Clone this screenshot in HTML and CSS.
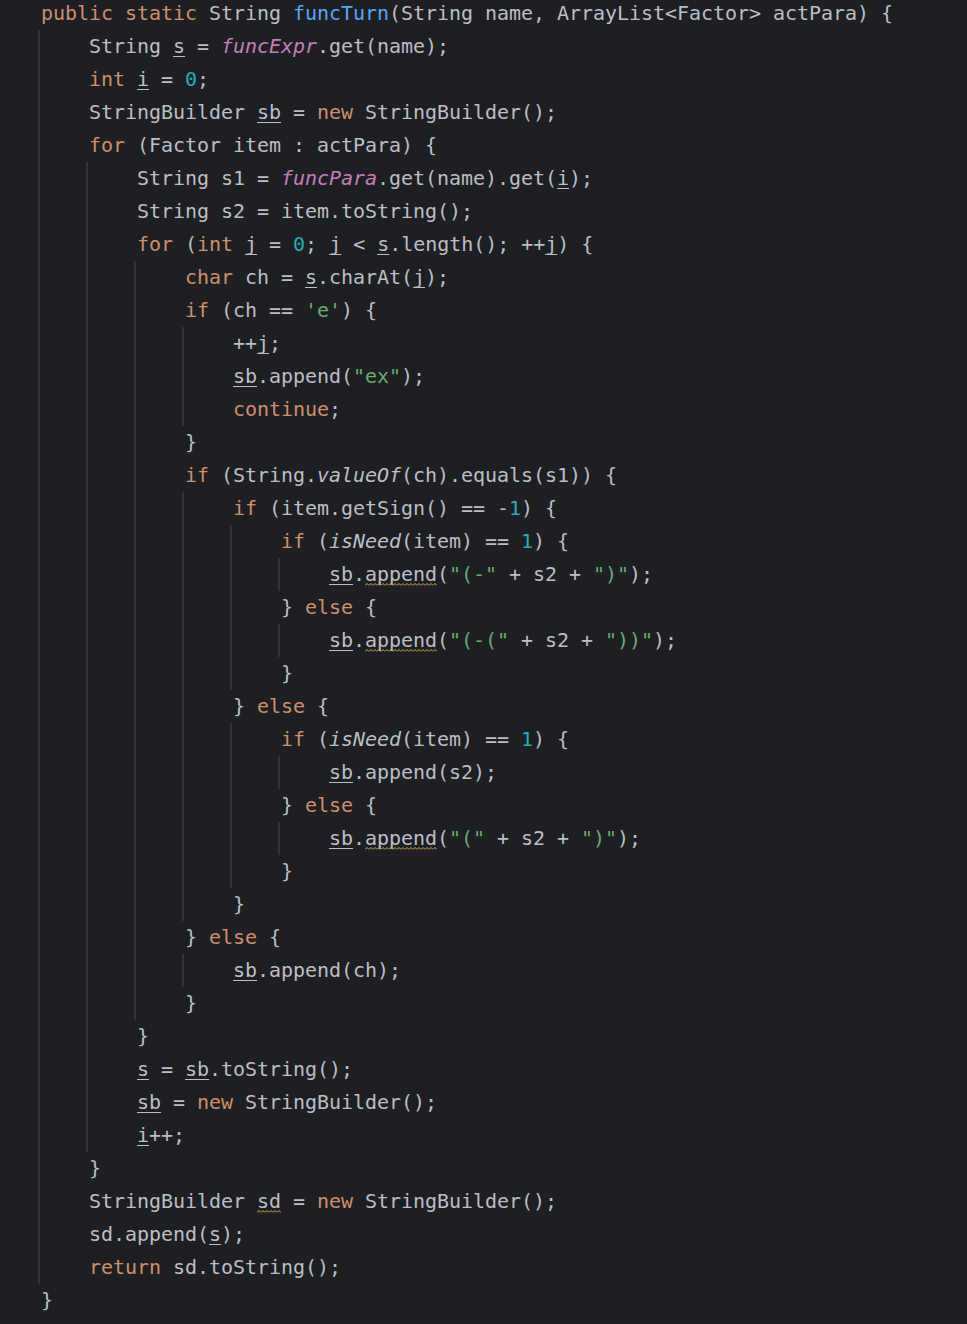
FILE: index.html
```html
<!DOCTYPE html>
<html lang="en">
<head>
<meta charset="utf-8">
<title>funcTurn</title>
<link rel="stylesheet" href="styles.css">
</head>
<body>
<div class="editor">
<div class="code">
<div class="ln"><span class="k">public static</span> String <span class="f">funcTurn</span>(String name, ArrayList&lt;Factor&gt; actPara) {</div>
<div class="blk">
  <div class="ln">String <span class="u">s</span> = <span class="sf">funcExpr</span>.get(name);</div>
  <div class="ln"><span class="k">int</span> <span class="u">i</span> = <span class="n">0</span>;</div>
  <div class="ln">StringBuilder <span class="u">sb</span> = <span class="k">new</span> StringBuilder();</div>
  <div class="ln"><span class="k">for</span> (Factor item : actPara) {</div>
  <div class="blk">
    <div class="ln">String s1 = <span class="sf">funcPara</span>.get(name).get(<span class="u">i</span>);</div>
    <div class="ln">String s2 = item.toString();</div>
    <div class="ln"><span class="k">for</span> (<span class="k">int</span> <span class="u">j</span> = <span class="n">0</span>; <span class="u">j</span> &lt; <span class="u">s</span>.length(); ++<span class="u">j</span>) {</div>
    <div class="blk">
      <div class="ln"><span class="k">char</span> ch = <span class="u">s</span>.charAt(<span class="u">j</span>);</div>
      <div class="ln"><span class="k">if</span> (ch == <span class="s">'e'</span>) {</div>
      <div class="blk">
        <div class="ln">++<span class="u">j</span>;</div>
        <div class="ln"><span class="u">sb</span>.append(<span class="s">"ex"</span>);</div>
        <div class="ln"><span class="k">continue</span>;</div>
      </div>
      <div class="ln">}</div>
      <div class="ln"><span class="k">if</span> (String.<span class="it">valueOf</span>(ch).equals(s1)) {</div>
      <div class="blk">
        <div class="ln"><span class="k">if</span> (item.getSign() == -<span class="n">1</span>) {</div>
        <div class="blk">
          <div class="ln"><span class="k">if</span> (<span class="it">isNeed</span>(item) == <span class="n">1</span>) {</div>
          <div class="blk">
            <div class="ln"><span class="u">sb</span>.<span class="w">append</span>(<span class="s">"(-"</span> + s2 + <span class="s">")"</span>);</div>
          </div>
          <div class="ln">} <span class="k">else</span> {</div>
          <div class="blk">
            <div class="ln"><span class="u">sb</span>.<span class="w">append</span>(<span class="s">"(-("</span> + s2 + <span class="s">"))"</span>);</div>
          </div>
          <div class="ln">}</div>
        </div>
        <div class="ln">} <span class="k">else</span> {</div>
        <div class="blk">
          <div class="ln"><span class="k">if</span> (<span class="it">isNeed</span>(item) == <span class="n">1</span>) {</div>
          <div class="blk">
            <div class="ln"><span class="u">sb</span>.append(s2);</div>
          </div>
          <div class="ln">} <span class="k">else</span> {</div>
          <div class="blk">
            <div class="ln"><span class="u">sb</span>.<span class="w">append</span>(<span class="s">"("</span> + s2 + <span class="s">")"</span>);</div>
          </div>
          <div class="ln">}</div>
        </div>
        <div class="ln">}</div>
      </div>
      <div class="ln">} <span class="k">else</span> {</div>
      <div class="blk">
        <div class="ln"><span class="u">sb</span>.append(ch);</div>
      </div>
      <div class="ln">}</div>
    </div>
    <div class="ln">}</div>
    <div class="ln"><span class="u">s</span> = <span class="u">sb</span>.toString();</div>
    <div class="ln"><span class="u">sb</span> = <span class="k">new</span> StringBuilder();</div>
    <div class="ln"><span class="u">i</span>++;</div>
  </div>
  <div class="ln">}</div>
  <div class="ln">StringBuilder <span class="w">sd</span> = <span class="k">new</span> StringBuilder();</div>
  <div class="ln">sd.append(<span class="u">s</span>);</div>
  <div class="ln"><span class="k">return</span> sd.toString();</div>
</div>
<div class="ln">}</div>
</div>
</div>
</body>
</html>
```
FILE: styles.css
```css
html, body {
  margin: 0;
  padding: 0;
  background: #1e1f22;
}

.editor {
  width: 967px;
  height: 1324px;
  overflow: hidden;
  padding-left: 41px;
  box-sizing: border-box;
  background: #1e1f22;
}

.code {
  margin-top: -3px;
  font-family: "DejaVu Sans Mono", "Liberation Mono", monospace;
  font-size: 20px;
  letter-spacing: -0.04px;
  line-height: 33px;
  color: #bcbec4;
}

.ln {
  height: 33px;
  white-space: pre;
}

.blk {
  margin-left: -3px;
  border-left: 2px solid #323438;
  padding-left: 49px;
}

.k { color: #cf8e6d; }
.f { color: #56a8f5; }
.sf { color: #c77dbb; font-style: italic; }
.n { color: #2aacb8; }
.s { color: #6aab73; }
.it { font-style: italic; }

.u {
  text-decoration: underline;
  text-decoration-color: #bcbec4;
  text-decoration-thickness: 1px;
  text-underline-offset: 3px;
  text-decoration-skip-ink: none;
}

.w {
  background-image: url("data:image/svg+xml,%3Csvg xmlns='http://www.w3.org/2000/svg' width='4' height='3'%3E%3Cpath d='M0 2.5 L2 0.5 L4 2.5' fill='none' stroke='%23d6ad45' stroke-width='1'/%3E%3C/svg%3E");
  background-repeat: repeat-x;
  background-size: 4px 3px;
  background-position: 0 100%;
}
```
